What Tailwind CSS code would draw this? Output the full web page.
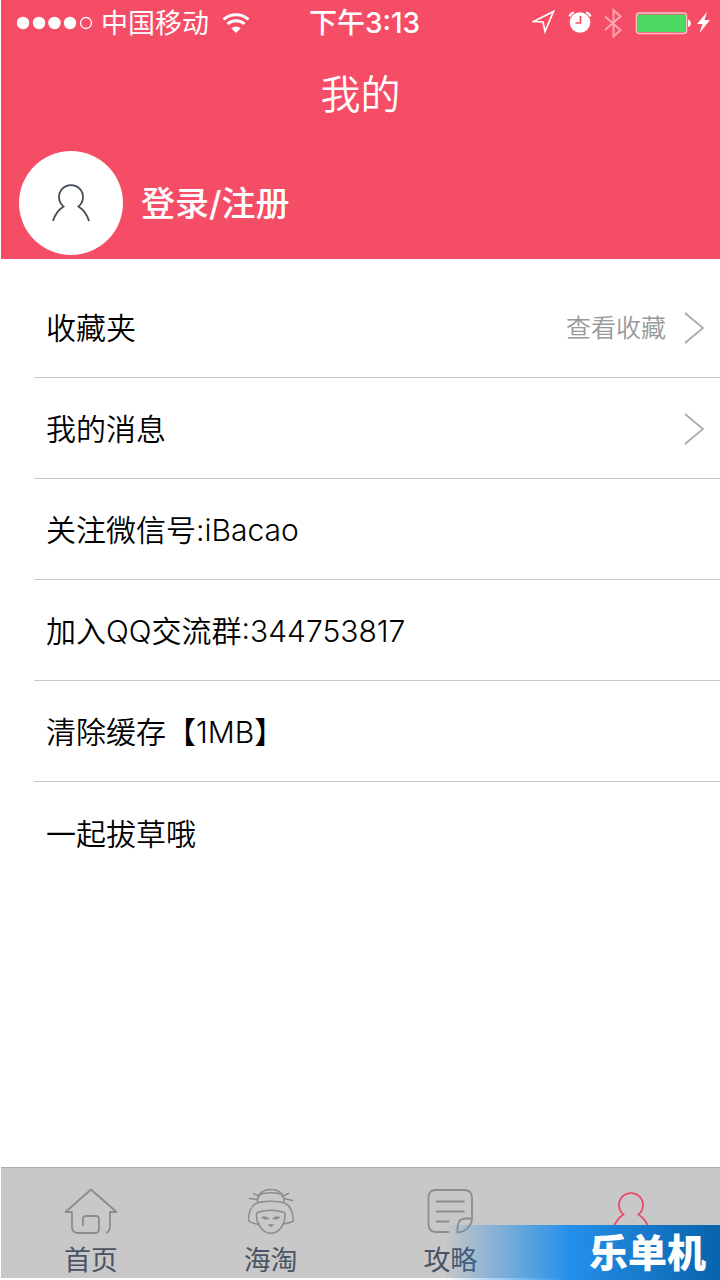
<!DOCTYPE html>
<html lang="zh-CN">
  <head>
    <meta charset="utf-8">
    <meta name="viewport" content="width=device-width, initial-scale=1">
    <title>我的</title>
    <script src="https://cdn.jsdelivr.net/npm/@tailwindcss/browser@4"></script>
  </head>

  <body class="min-h-screen flex flex-col pl-px pb-0.5 bg-white text-black font-['Inter','Noto_Sans_CJK_SC',sans-serif]">

    <header class="bg-[#f64d67] text-white">
      <!-- Status bar -->
      <div class="h-[46px] pl-4 pr-2 grid grid-cols-[1fr_auto_1fr] items-center text-[27px] leading-none">
        <div class="flex items-center gap-1.5">
          <svg class="w-[78px] h-[14px]" viewBox="1 0 78 14" fill="#fff">
            <circle cx="7" cy="7" r="6.2"/>
            <circle cx="23" cy="7" r="6.2"/>
            <circle cx="38.500" cy="7" r="6.2"/>
            <circle cx="54" cy="7" r="6.2"/>
            <circle cx="70" cy="7" r="5.5" fill="none" stroke="#fff" stroke-width="1.3"/>
          </svg>
          <span>中国移动</span>
          <svg class="w-[38px] h-[22px]" viewBox="0 0 38 22" fill="none" stroke="#fff" stroke-width="3">
            <path d="M8.500 7.500a18.500 18.500 0 0 1 25 0"/>
            <path d="M12.500 12a12.500 12.500 0 0 1 17 0"/>
            <path d="M21 21l-4.700-4.800a7 7 0 0 1 9.400 0z" fill="#fff" stroke="none"/>
          </svg>
        </div>
        <div class="text-[28px] font-medium">下午3:13</div>
        <div class="flex items-center justify-end">
          <svg class="w-[180px] h-[32px]" viewBox="532 7 180 32" fill="none" stroke="#fff">
            <!-- location -->
            <path d="M533.500 21.500L553.500 11.500 545 31.500 543 22z" stroke-width="1.700"/>
            <!-- alarm -->
            <circle cx="580" cy="22.500" r="10.300" fill="#fff" stroke="none"/>
            <path d="M580.500 16v7h-5" stroke="#f64d67" stroke-width="1.700"/>
            <path d="M569.500 16.500a6 6 0 0 1 4.500-4M590.500 16.500a6 6 0 0 0-4.500-4" stroke-width="2.200"/>
            <!-- bluetooth -->
            <path d="M605 16.500L620.500 30 613.500 36.500V10L620.500 16.500 605 30" stroke="#fba5b1" stroke-width="2"/>
            <!-- battery -->
            <rect x="636.500" y="13" width="50" height="20.500" rx="3" stroke="#fdc3cb" stroke-width="1.600"/>
            <rect x="638" y="14.500" width="47" height="17.500" rx="1" fill="#4cd964" stroke="none"/>
            <path d="M688 19.500c2 .5 2.800 2 2.800 3.800s-.8 3.300-2.800 3.800z" fill="#fff" stroke="none"/>
            <path d="M707 12L697 24h5.500L699.500 33l10.500-13h-5.500z" fill="#fff" stroke="none"/>
          </svg>
        </div>
      </div>

      <h1 class="h-24 pt-0.5 flex items-center justify-center text-[40px] leading-none font-[350]">我的</h1>

      <a href="#login" class="flex items-center gap-[18px] pt-[9px] pb-1 pl-[18px] text-[34px] leading-none font-medium">
        <span class="size-[104px] rounded-full bg-white flex items-center justify-center">
          <svg class="size-[38px]" viewBox="0 0 38 38" fill="none" stroke="#434b58" stroke-width="1.800">
            <path d="M1 37C3 30 7 25.500 11.500 22.500A12 12 0 1 1 26.500 22.500C31 25.500 35 30 37 37"/>
          </svg>
        </span>
        <span class="pt-0.5">登录/注册</span>
      </a>
    </header>

    <!-- Menu -->
    <main class="flex-grow pt-[18px] pl-[33px] text-[30px] leading-none font-[350]">
      <a href="#favorites" class="h-[101px] pt-0.5 pl-3 pr-4 flex items-center border-b border-[#c8c8c8]">
        收藏夹
        <span class="ml-auto mr-[18px] text-[25px] text-[#999]">查看收藏</span>
        <svg class="w-5 h-8" viewBox="0 0 20 32" fill="none" stroke="#aaa" stroke-width="1.800"><path d="M1 1L19 16 1 31"/></svg>
      </a>
      <a href="#messages" class="h-[101px] pt-0.5 pl-3 pr-4 flex items-center border-b border-[#c8c8c8]">
        我的消息
        <svg class="ml-auto w-5 h-8" viewBox="0 0 20 32" fill="none" stroke="#aaa" stroke-width="1.800"><path d="M1 1L19 16 1 31"/></svg>
      </a>
      <a href="#wechat" class="h-[101px] pt-0.5 pl-3 pr-4 flex items-center border-b border-[#c8c8c8]">关注微信号:iBacao</a>
      <a href="#qq" class="h-[101px] pt-0.5 pl-3 pr-4 flex items-center border-b border-[#c8c8c8]">加入QQ交流群:344753817</a>
      <button type="button" class="w-full h-[101px] pt-0.5 pl-3 pr-4 flex items-center border-b border-[#c8c8c8]">清除缓存【1MB】</button>
      <a href="#about" class="h-[101px] pt-0.5 pl-3 pr-4 flex items-center">一起拔草哦</a>
    </main>

    <!-- Tabs -->
    <nav class="h-[111px] grid grid-cols-4 bg-[#c8c8c8] border-t border-[#aaa] text-[27px] leading-none text-[#4a5464]">
      <a href="#home" class="flex flex-col items-center gap-[13px] pt-5">
        <svg class="w-[54px] h-[46px]" viewBox="0 0 54 46" fill="none" stroke="#8c8c8c" stroke-width="1.800" stroke-linejoin="round">
          <path d="M19 38V31q0-3 3-3h10q3 0 3 3v10q0 4-4 4H13q-5-1-5-6V24H1.500L27 1.500 52.500 24H46v15q0 4-4 6"/>
        </svg>
        首页
      </a>
      <a href="#haitao" class="flex flex-col items-center gap-[13px] pt-5">
        <svg class="w-[48px] h-[46px]" viewBox="0 0 48 46" fill="none" stroke="#8c8c8c" stroke-width="1.500" stroke-linecap="round">
          <path d="M10.500 13.500C10 6 16 1.500 24 1.500S37.500 6 37 13.500"/>
          <path d="M13 6.500C18 4 30 4 35 6.500M6.500 5.500L12.500 8.500M2.500 10.500L10.500 11.500M41.500 5.500L35 8.500M45.500 12.500L37 10.500"/>
          <path d="M12 36Q6 36 1.500 33C1.500 24 4 18 9 15.500C16 12.500 32 12.500 38.500 15.500C44 18 46 24 46.500 33Q41 36 36 36"/>
          <path d="M9.500 27Q9 24.500 12 24C19 22 29 22 35.500 24Q38.500 24.500 38 27C38 38 31 45 24 45.200C17 45 9.500 38 9.500 27z"/>
          <path d="M15.500 29.500Q18 28 21 30.500Q18 31 15.500 29.500zM32 29.500Q29.500 28 26.500 30.500Q29.500 31 32 29.500z" fill="#8c8c8c"/>
          <path d="M22.500 37h3L24 38.500z" fill="#8c8c8c"/>
        </svg>
        海淘
      </a>
      <a href="#guides" class="flex flex-col items-center gap-[13px] pt-5">
        <svg class="w-[46px] h-[46px]" viewBox="0 0 46 46" fill="none" stroke="#8c8c8c" stroke-width="1.800" stroke-linecap="round" stroke-linejoin="round">
          <path d="M21.500 44H9Q1.500 44 1.500 36V10Q1.500 2 9 2H37Q45 2 45 10V30.500C45 38 38 44 30.500 44.500V40Q31 30.500 38 30.500H45"/>
          <path d="M9.500 13.500H37M9.500 23.500H37M9.500 33.500H21.500"/>
        </svg>
        攻略
      </a>
      <a href="#me" aria-label="我的" class="flex flex-col items-center pt-6 pl-0.5">
        <svg class="size-[38px]" viewBox="0 0 38 38" fill="none" stroke="#e84a6c" stroke-width="1.800">
          <path d="M1 37C3 30 7 25.500 11.500 22.500A12 12 0 1 1 26.500 22.500C31 25.500 35 30 37 37"/>
        </svg>
      </a>
    </nav>

    <!-- Site badge over the tabs -->
    <div class="absolute bottom-0 right-0 w-[290px] h-[55px] pr-3.5 flex items-center justify-end bg-linear-to-r from-[#8fbfe6]/0 from-5% via-[#2590ea] via-48% to-[#0763ac] text-[39px] leading-none font-black text-white">乐单机</div>

  </body>
</html>
